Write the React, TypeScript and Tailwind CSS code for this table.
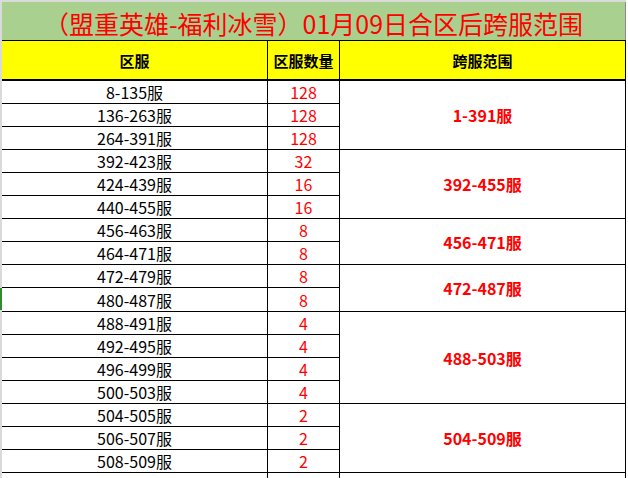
import React from "react";

type Row = { name: string; count: string };
const rows: Row[] = [
  { name: "8-135服", count: "128" },
  { name: "136-263服", count: "128" },
  { name: "264-391服", count: "128" },
  { name: "392-423服", count: "32" },
  { name: "424-439服", count: "16" },
  { name: "440-455服", count: "16" },
  { name: "456-463服", count: "8" },
  { name: "464-471服", count: "8" },
  { name: "472-479服", count: "8" },
  { name: "480-487服", count: "8" },
  { name: "488-491服", count: "4" },
  { name: "492-495服", count: "4" },
  { name: "496-499服", count: "4" },
  { name: "500-503服", count: "4" },
  { name: "504-505服", count: "2" },
  { name: "506-507服", count: "2" },
  { name: "508-509服", count: "2" },
];

const groups = [
  { label: "1-391服", start: 0, span: 3 },
  { label: "392-455服", start: 3, span: 3 },
  { label: "456-471服", start: 6, span: 2 },
  { label: "472-487服", start: 8, span: 2 },
  { label: "488-503服", start: 10, span: 4 },
  { label: "504-509服", start: 14, span: 3 },
];

const spanClass: Record<number, string> = {
  2: "row-span-2",
  3: "row-span-3",
  4: "row-span-4",
};

const font = { fontFamily: '"Noto Sans CJK SC", "Noto Sans", sans-serif' };

export default function App() {
  const cells: React.ReactNode[] = [];
  rows.forEach((r, i) => {
    cells.push(
      <div
        key={`n${i}`}
        className="flex items-center justify-center border-r border-b border-black text-[16px] leading-none text-black"
      >
        {r.name}
      </div>
    );
    cells.push(
      <div
        key={`c${i}`}
        className="flex items-center justify-center border-r border-b border-black text-[16px] leading-none text-[#ff0000]"
      >
        {r.count}
      </div>
    );
    const g = groups.find((x) => x.start === i);
    if (g) {
      cells.push(
        <div
          key={`g${i}`}
          className={`flex items-center justify-center border-r border-b border-black text-[16px] font-bold leading-none text-[#ff0000] ${spanClass[g.span]}`}
        >
          {g.label}
        </div>
      );
    }
  });

  return (
    <div className="flex h-[478px] w-[628px] items-start overflow-hidden bg-white" style={font}>
      {/* row header strip */}
      <div className="flex h-[478px] w-[2px] shrink-0 flex-col">
        <div className="h-[288px] shrink-0 bg-[#dadada]" />
        <div className="h-[22px] shrink-0 bg-[#2e8b2e]" />
        <div className="flex-1 bg-[#dadada]" />
      </div>
      <div className="flex w-[624px] shrink-0 flex-col">
        <div className="h-[2px] shrink-0 bg-[#dadada]" />
        <div className="flex h-[38px] shrink-0 items-center justify-center border-r border-[#8c8c8c] bg-[#a9d08e] pt-[4px] text-[25px] leading-none text-[#ff0000]">
          （盟重英雄-福利冰雪）01月09日合区后跨服范围
        </div>
        <div className="grid shrink-0 grid-cols-[266px_72px_286px] grid-rows-[41px_repeat(9,23px)_24px_repeat(7,23px)_23px]">
          <div className="flex items-center justify-center border-t border-r border-b-2 border-black bg-[#ffff00] text-[15px] font-bold leading-none text-black">
            区服
          </div>
          <div className="flex items-center justify-center border-t border-r border-b-2 border-black bg-[#ffff00] text-[15px] font-bold leading-none text-black">
            区服数量
          </div>
          <div className="flex items-center justify-center border-t border-r border-b-2 border-black bg-[#ffff00] text-[15px] font-bold leading-none text-black">
            跨服范围
          </div>
          {cells}
          <div className="border-r border-b border-black" />
          <div className="border-r border-b border-black" />
          <div className="border-r border-b border-black" />
        </div>
      </div>
    </div>
  );
}
